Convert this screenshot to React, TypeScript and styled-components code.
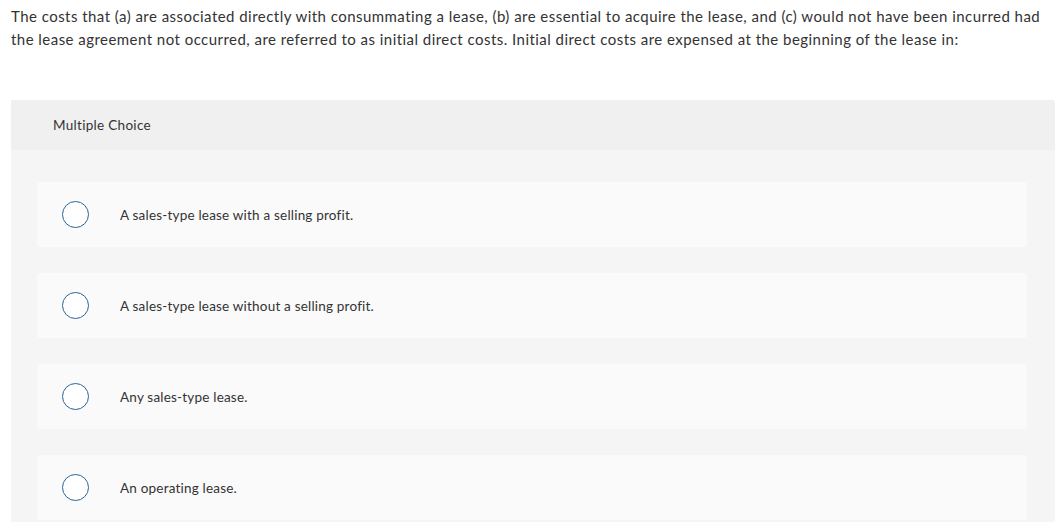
import React from 'react';
import styled, { createGlobalStyle } from 'styled-components';

const options = [
  'A sales-type lease with a selling profit.',
  'A sales-type lease without a selling profit.',
  'Any sales-type lease.',
  'An operating lease.',
];

function App() {
  return (
    <Page>
      <GlobalStyle />
      <Question>
        The costs that (a) are associated directly with consummating a lease, (b) are essential to acquire the
        lease, and (c) would not have been incurred had the lease agreement not occurred, are referred to as initial
        direct costs. Initial direct costs are expensed at the beginning of the lease in:
      </Question>
      <Panel>
        <PanelHeader>Multiple Choice</PanelHeader>
        <Choices>
          {options.map((text) => (
            <Choice key={text}>
              <Radio />
              <ChoiceText>{text}</ChoiceText>
            </Choice>
          ))}
        </Choices>
      </Panel>
    </Page>
  );
}

export default App;

const GlobalStyle = createGlobalStyle`
  html, body {
    margin: 0;
    padding: 0;
    background: #fff;
    overflow: hidden;
  }
`;

const Page = styled.div`
  width: 1063px;
  height: 522px;
  overflow: hidden;
  font-family: Lato, 'Open Sans', sans-serif;
  color: #333;
`;

const Question = styled.p`
  margin: 0;
  padding: 5px 11px 0 11px;
  font-size: 15px;
  line-height: 23px;
  letter-spacing: 0.46px;
`;

const Panel = styled.div`
  margin: 49px 8px 0 11px;
  background: #f5f5f5;
  border-radius: 0 3px 0 0;
`;

const PanelHeader = styled.div`
  height: 50px;
  display: flex;
  align-items: center;
  padding-left: 42px;
  background: #f0f0f0;
  font-size: 13.5px;
  letter-spacing: 0.3px;
  border-radius: 0 3px 0 0;
`;

const Choices = styled.div`
  display: flex;
  flex-direction: column;
  gap: 26px;
  padding: 32px 28px 40px 26px;
`;

const Choice = styled.div`
  height: 65px;
  display: flex;
  align-items: center;
  background: #fafafa;
  border-radius: 3px;
`;

const Radio = styled.span`
  box-sizing: border-box;
  width: 27px;
  height: 27px;
  margin-left: 25px;
  border: 1.5px solid #2a6496;
  border-radius: 50%;
  background: #fff;
  flex-shrink: 0;
`;

const ChoiceText = styled.span`
  margin-left: 31px;
  font-size: 13.5px;
  letter-spacing: 0.2px;
`;
